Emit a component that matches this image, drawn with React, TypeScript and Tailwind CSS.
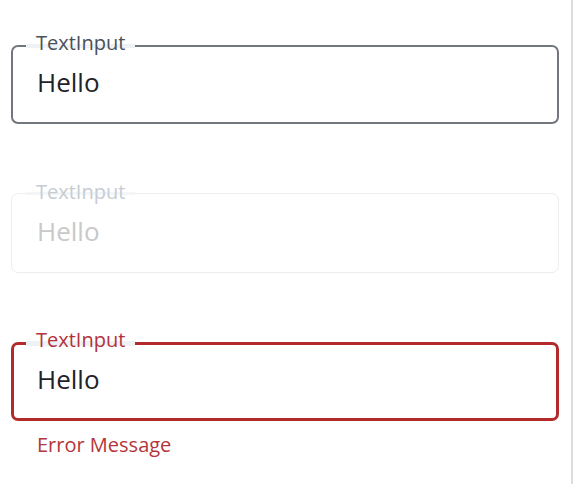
const FONT = "font-['Open_Sans','Noto_Sans',sans-serif]"

export default function App() {
  return (
    <div className={`flex h-screen w-full bg-white ${FONT}`}>
      <div className="flex flex-1 flex-col px-[11px] pr-[12px] pt-[45px]">
        {/* Default */}
        <div className="relative h-[79px] rounded-[7px] border-2 border-[#72767d] bg-white pl-[24px] pt-[17px]">
          <span className="absolute left-[13px] top-[-18px] bg-[linear-gradient(to_bottom,transparent_15px,#eef2f6_15px,#eef2f6_19px,transparent_19px)] px-[10px] text-[20px] leading-[27px] text-[#4a5058]">
            TextInput
          </span>
          <div className="text-[26px] leading-[36px] text-[#1f2328]">Hello</div>
        </div>

        {/* Disabled */}
        <div className="relative mt-[69px] h-[80px] rounded-[7px] border border-[#ededed] bg-white pl-[25px] pt-[19px]">
          <span className="absolute left-[14px] top-[-16px] bg-[linear-gradient(to_bottom,transparent_14px,#f3f6f9_14px,#f3f6f9_17px,transparent_17px)] px-[10px] text-[20px] leading-[27px] text-[#c6ccd2]">
            TextInput
          </span>
          <div className="text-[26px] leading-[36px] text-[#c9c9c9]">Hello</div>
        </div>

        {/* Error */}
        <div className="relative mt-[69px] h-[79px] rounded-[7px] border-[3px] border-[#b22a2a] bg-white pl-[23px] pt-[16px]">
          <span className="absolute left-[12px] top-[-19px] bg-[linear-gradient(to_bottom,transparent_15px,#eef2f6_15px,#eef2f6_20px,transparent_20px)] px-[10px] text-[20px] leading-[27px] text-[#b3323a]">
            TextInput
          </span>
          <div className="text-[26px] leading-[36px] text-[#1f2328]">Hello</div>
        </div>
        <div className="mt-[10px] pl-[26px] text-[20px] leading-[27px] text-[#b3363a]">Error Message</div>
      </div>
      <div className="w-[2px] shrink-0 bg-[#dcdde0]" />
      <div className="w-[1px] shrink-0" />
    </div>
  )
}
